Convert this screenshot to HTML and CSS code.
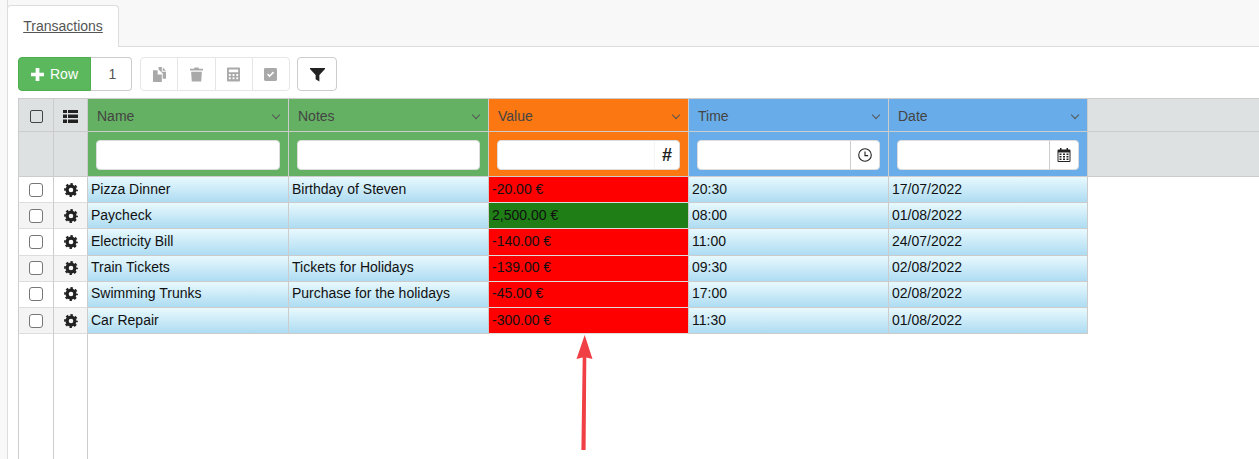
FILE: index.html
```html
<!DOCTYPE html>
<html lang="en">
<head>
<meta charset="utf-8">
<title>Transactions</title>
<link rel="stylesheet" href="styles.css">
</head>
<body>
<svg class="defs" width="0" height="0" aria-hidden="true">
  <symbol id="gear" viewBox="0 0 14 14">
    <circle cx="7" cy="7" r="3.900" fill="none" stroke="#222" stroke-width="3.200"/>
    <circle cx="7" cy="7" r="6" fill="none" stroke="#222" stroke-width="1.800" stroke-dasharray="2.500 2.212" stroke-dashoffset="1.250"/>
  </symbol>
</svg>

<div class="page">
  <div class="tabs"><a class="tab">Transactions</a></div>
  <main class="panel">
    <div class="toolbar">
      <div class="add-group">
        <button class="add-btn">
          <svg class="plus" viewBox="0 0 14 14"><path d="M5 0h4v5h5v4H9v5H5V9H0V5h5z"/></svg>
          <span>Row</span>
        </button>
        <span class="count">1</span>
      </div>
      <div class="action-group">
        <span class="action">
          <svg viewBox="0 0 14 16"><path d="M0 3.500H5V8H9.500V16H0zM6 0H9.500V5H14V12.500H10.500V7L6 2.500zM10.500 .5L14 4H10.500z"/></svg>
        </span>
        <span class="action">
          <svg viewBox="0 0 14 16"><path d="M0 1.800h4.200L5 .5h4l.8 1.300H14v2H0zM1.200 5h11.600l-.7 10.500H1.900z"/></svg>
        </span>
        <span class="action">
          <svg viewBox="0 0 14 16"><path fill-rule="evenodd" d="M1 .5h12a1 1 0 0 1 1 1v13a1 1 0 0 1-1 1H1a1 1 0 0 1-1-1v-13a1 1 0 0 1 1-1zM2 2.500v3h10v-3zM2 7.500v2h2v-2zM6 7.500v2h2v-2zM10 7.500v2h2v-2zM2 11v2h2v-2zM6 11v2h2v-2zM10 11v2h2v-2z"/></svg>
        </span>
        <span class="action">
          <svg viewBox="0 0 14 14"><path fill-rule="evenodd" d="M1.500 0h11A1.500 1.500 0 0 1 14 1.500v11a1.500 1.500 0 0 1-1.500 1.500h-11A1.500 1.500 0 0 1 0 12.500v-11A1.500 1.500 0 0 1 1.500 0zM3.300 7.200L6 9.900l4.900-4.900-1.200-1.200L6 7.500 4.500 6z"/></svg>
        </span>
      </div>
      <button class="filter-btn">
        <svg viewBox="0 0 16 16"><path d="M0 1h16v1.200L10 8.600V15.500L6 13V8.600L0 2.200z"/></svg>
      </button>
    </div>

    <div class="grid">
      <div class="row head-row">
        <div class="cell side"><span class="head-check"></span></div>
        <div class="cell side">
          <svg class="list-icon" viewBox="0 0 15 13"><path d="M0 0h4v3H0zM5 0h10v3H5zM0 4.500h4v3.500H0zM5 4.500h10v3.500H5zM0 9.500h4V13H0zM5 9.500h10V13H5z"/></svg>
        </div>
        <div class="cell col green title">Name<i class="chev"></i></div>
        <div class="cell col green title">Notes<i class="chev"></i></div>
        <div class="cell col orange title">Value<i class="chev"></i></div>
        <div class="cell col blue title">Time<i class="chev"></i></div>
        <div class="cell col blue title">Date<i class="chev"></i></div>
        <div class="cell rest"></div>
      </div>
      <div class="row filter-row">
        <div class="cell side"></div>
        <div class="cell side"></div>
        <div class="cell col green"><div class="field"></div></div>
        <div class="cell col green"><div class="field"></div></div>
        <div class="cell col orange"><div class="field"><span class="addon plain hash">#</span></div></div>
        <div class="cell col blue"><div class="field"><span class="addon">
          <svg viewBox="0 0 14 14"><circle cx="7" cy="7" r="6.300" fill="none" stroke="#222" stroke-width="1.100"/><path d="M7 3.500V7.600H10.200" fill="none" stroke="#222" stroke-width="1.100"/></svg>
        </span></div></div>
        <div class="cell col blue"><div class="field"><span class="addon">
          <svg viewBox="0 0 13 14"><path fill-rule="evenodd" fill="#222" d="M2.500 0h1.500v1.500h5V0h1.500v1.500H12a1 1 0 0 1 1 1V13a1 1 0 0 1-1 1H1a1 1 0 0 1-1-1V2.500a1 1 0 0 1 1-1h1.500zM1 4.500V13h11V4.500zM2 5.500h2v1.500H2zM5.500 5.500h2v1.500h-2zM9 5.500h2v1.500H9zM2 8h2v1.500H2zM5.500 8h2v1.500h-2zM9 8h2v1.500H9zM2 10.500h2V12H2zM5.500 10.500h2V12h-2zM9 10.500h2V12H9z"/></svg>
        </span></div></div>
        <div class="cell rest"></div>
      </div>

      <div class="row data-row">
        <div class="cell tool"><span class="check"></span></div>
        <div class="cell tool"><svg class="gear"><use href="#gear"/></svg></div>
        <div class="cell col data">Pizza Dinner</div>
        <div class="cell col data">Birthday of Steven</div>
        <div class="cell col neg">-20.00 €</div>
        <div class="cell col data">20:30</div>
        <div class="cell col data">17/07/2022</div>
      </div>
      <div class="row data-row">
        <div class="cell tool"><span class="check"></span></div>
        <div class="cell tool"><svg class="gear"><use href="#gear"/></svg></div>
        <div class="cell col data">Paycheck</div>
        <div class="cell col data"></div>
        <div class="cell col pos">2,500.00 €</div>
        <div class="cell col data">08:00</div>
        <div class="cell col data">01/08/2022</div>
      </div>
      <div class="row data-row">
        <div class="cell tool"><span class="check"></span></div>
        <div class="cell tool"><svg class="gear"><use href="#gear"/></svg></div>
        <div class="cell col data">Electricity Bill</div>
        <div class="cell col data"></div>
        <div class="cell col neg">-140.00 €</div>
        <div class="cell col data">11:00</div>
        <div class="cell col data">24/07/2022</div>
      </div>
      <div class="row data-row">
        <div class="cell tool"><span class="check"></span></div>
        <div class="cell tool"><svg class="gear"><use href="#gear"/></svg></div>
        <div class="cell col data">Train Tickets</div>
        <div class="cell col data">Tickets for Holidays</div>
        <div class="cell col neg">-139.00 €</div>
        <div class="cell col data">09:30</div>
        <div class="cell col data">02/08/2022</div>
      </div>
      <div class="row data-row">
        <div class="cell tool"><span class="check"></span></div>
        <div class="cell tool"><svg class="gear"><use href="#gear"/></svg></div>
        <div class="cell col data">Swimming Trunks</div>
        <div class="cell col data">Purchase for the holidays</div>
        <div class="cell col neg">-45.00 €</div>
        <div class="cell col data">17:00</div>
        <div class="cell col data">02/08/2022</div>
      </div>
      <div class="row data-row">
        <div class="cell tool"><span class="check"></span></div>
        <div class="cell tool"><svg class="gear"><use href="#gear"/></svg></div>
        <div class="cell col data">Car Repair</div>
        <div class="cell col data"></div>
        <div class="cell col neg">-300.00 €</div>
        <div class="cell col data">11:30</div>
        <div class="cell col data">01/08/2022</div>
      </div>
      <div class="row filler-row">
        <div class="cell blank"></div>
        <div class="cell blank"></div>
      </div>
    </div>
  </main>
  <svg class="arrow" viewBox="0 0 24 120" aria-hidden="true">
    <path d="M12.700 1L20.500 25 14.300 23.500 13.600 116H9.400L10.700 23.500 4.500 25z"/>
  </svg>
</div>
</body>
</html>
```
FILE: styles.css
```css
* { box-sizing: border-box; }
html, body { margin: 0; height: 100%; overflow: hidden; background: #fff; }
body { font-family: "Liberation Sans", Arial, sans-serif; font-size: 14px; color: #333; }
.defs { position: absolute; }
.page { position: relative; height: 459px; padding-left: 7px; background: linear-gradient(#f8f8f8, #f8f8f8) left / 7px 100% no-repeat #fff; }

.tabs { height: 47px; padding-top: 5px; background: #f8f8f8; border-bottom: 1px solid #ddd; border-left: 1px solid #ddd; }
.tab { display: block; width: 112px; height: 42px; margin-left: -1px; padding-top: 12px; text-align: center; background: #fff; border: 1px solid #ddd; border-bottom: 0; border-radius: 4px 4px 0 0; color: #555; font-size: 14px; text-decoration: underline; }

.panel { height: 412px; padding: 10px 0 0 10px; border-left: 1px solid #ddd; }
.toolbar { display: flex; height: 34px; margin-bottom: 7px; }
.add-group { display: flex; margin-right: 8px; }
.add-btn { display: flex; align-items: center; gap: 6px; width: 73px; padding: 0 0 0 12px; background: #5cb85c; border: 1px solid #4cae4c; border-radius: 4px 0 0 4px; color: #fff; font: 14px "Liberation Sans", Arial, sans-serif; }
.plus { width: 13px; height: 13px; fill: #fff; }
.count { width: 41px; padding-left: 3px; display: flex; align-items: center; justify-content: center; color: #555; background: #fff; border: 1px solid #ccc; border-left: 0; border-radius: 0 4px 4px 0; }
.action-group { display: flex; width: 150px; margin-right: 7px; border: 1px solid #e6e6e6; border-radius: 4px; background: #fff; }
.action { flex: 1; display: flex; align-items: center; justify-content: center; border-right: 1px solid #e6e6e6; }
.action:last-child { border-right: 0; }
.action svg { width: 13px; height: 15px; fill: #a9a9a9; }
.filter-btn { width: 40px; padding: 0; display: flex; align-items: center; justify-content: center; background: #fff; border: 1px solid #ccc; border-radius: 4px; }
.filter-btn svg { width: 15px; height: 15px; fill: #222; }

.grid { display: flex; flex-direction: column; height: 361px; }
.row { display: flex; }
.cell { flex: none; display: flex; align-items: center; }
.side { justify-content: center; background: #dee1e2; border-right: 1px solid #ccc; }
.side:first-child { width: 36px; border-left: 1px solid #ccc; }
.side:nth-child(2) { width: 34px; }
.head-row .side { padding-top: 2px; }
.col { width: 200px; border-right: 1px solid #ccc; }
.col:nth-child(3) { width: 201px; }
.col:nth-child(7) { width: 199px; }
.rest { flex: 1; background: #dee1e2; }
.head-row { height: 34px; border-top: 1px solid #ccc; border-bottom: 1px solid #ccc; }
.filter-row { height: 45px; border-bottom: 1px solid #ccc; }
.green { background: #65b163; }
.orange { background: #fb7712; }
.blue { background: #68ade9; }
.title { position: relative; padding: 2px 0 0 9px; color: #444; font-size: 14px; }
.chev { position: absolute; right: 9px; top: 13px; width: 6px; height: 6px; border-right: 1px solid #555; border-bottom: 1px solid #555; transform: rotate(45deg); }
.head-check { width: 13px; height: 13px; border: 1.5px solid #444; border-radius: 2px; }
.list-icon { width: 15px; height: 13px; fill: #222; }

.filter-row .col { padding: 2px 8px 0; }
.field { flex: 1; height: 30px; display: flex; justify-content: flex-end; background: #fff; border: 1px solid #ddd; border-radius: 4px; }
.addon { width: 29px; display: flex; align-items: center; justify-content: center; border-left: 1px solid #ccc; }
.addon svg { width: 14px; height: 14px; }
.addon.plain { width: 25px; border-left-color: #f4f4f4; }
.hash { color: #222; font-size: 18px; font-weight: 700; }

.data-row { height: 26.2px; color: #111; font-size: 14px; }
.tool { justify-content: center; background: #f4f4f4; border-right: 1px solid #ccc; border-bottom: 1px solid #ddd; }
.tool:first-child { width: 36px; border-left: 1px solid #ccc; }
.tool:nth-child(2) { width: 34px; }
.data-row:nth-child(odd) .tool { background: #fff; }
.data { padding: 0 0 2px 3px; background: linear-gradient(#e8f9fe, #aedcf2); border-bottom: 1px solid #ccc; white-space: nowrap; }
.neg, .pos { padding: 0 0 2px 3px; border-bottom: 1px solid #ddd; white-space: nowrap; }
.neg { background: #fe0000; }
.pos { background: #1f7e16; }
.check { width: 14px; height: 14px; background: #fff; border: 1px solid #777; border-radius: 3px; }
.gear { width: 14px; height: 14px; }
.filler-row { flex: 1; }
.blank { border-right: 1px solid #ccc; }
.blank:first-child { width: 36px; border-left: 1px solid #ccc; }
.blank:nth-child(2) { width: 34px; }

.arrow { position: absolute; left: 572px; top: 334px; width: 24px; height: 120px; fill: #f04045; }
```
